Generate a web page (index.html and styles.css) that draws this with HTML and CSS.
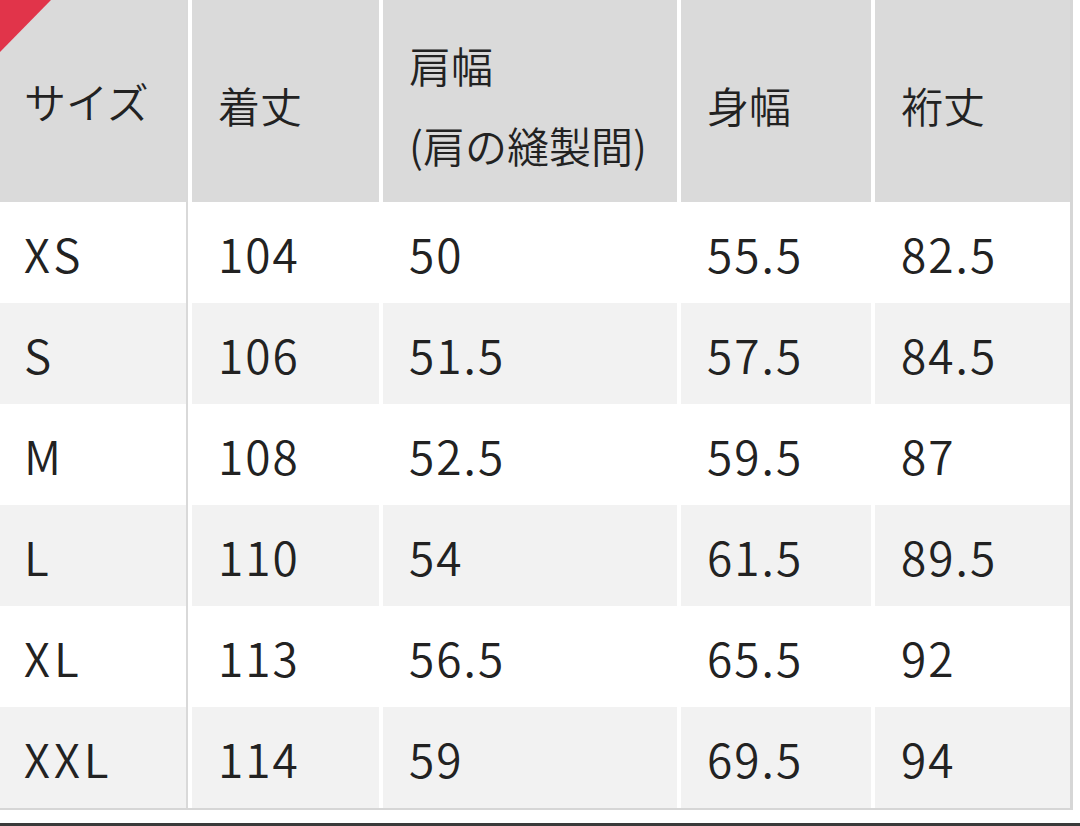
FILE: index.html
```html
<!DOCTYPE html>
<html lang="ja">
<head>
<meta charset="utf-8">
<title>サイズ表</title>
<link rel="stylesheet" href="styles.css">
</head>
<body>
<div class="page">
  <div class="corner"></div>
  <div class="table">
    <div class="row head">
      <div class="cell">サイズ</div>
      <div class="cell">着丈</div>
      <div class="cell two"><span class="ln">肩幅</span><span class="ln">(肩の縫製間)</span></div>
      <div class="cell">身幅</div>
      <div class="cell">裄丈</div>
    </div>
    <div class="row">
      <div class="cell">XS</div><div class="cell">104</div><div class="cell">50</div><div class="cell">55.5</div><div class="cell">82.5</div>
    </div>
    <div class="row alt">
      <div class="cell">S</div><div class="cell">106</div><div class="cell">51.5</div><div class="cell">57.5</div><div class="cell">84.5</div>
    </div>
    <div class="row">
      <div class="cell">M</div><div class="cell">108</div><div class="cell">52.5</div><div class="cell">59.5</div><div class="cell">87</div>
    </div>
    <div class="row alt">
      <div class="cell">L</div><div class="cell">110</div><div class="cell">54</div><div class="cell">61.5</div><div class="cell">89.5</div>
    </div>
    <div class="row">
      <div class="cell">XL</div><div class="cell">113</div><div class="cell">56.5</div><div class="cell">65.5</div><div class="cell">92</div>
    </div>
    <div class="row alt">
      <div class="cell">XXL</div><div class="cell">114</div><div class="cell">59</div><div class="cell">69.5</div><div class="cell">94</div>
    </div>
  </div>
  <div class="bottom-bar"></div>
</div>
</body>
</html>
```

FILE: styles.css
```css
html, body {
  margin: 0;
  padding: 0;
  background: #ffffff;
}

.page {
  position: relative;
  width: 1080px;
  height: 826px;
  overflow: hidden;
  font-family: "Noto Sans CJK JP", "Noto Sans", sans-serif;
  font-weight: 350;
  color: #222222;
}

.corner {
  position: absolute;
  left: 0;
  top: 0;
  width: 52px;
  height: 52px;
  background: #e1344a;
  clip-path: polygon(0 0, 51px 0, 0 52px);
  z-index: 2;
}

.table {
  width: 1073px;
  border-right: 3px solid #d6d6d6;
  border-bottom: 2px solid #d6d6d6;
  box-sizing: border-box;
}

.row {
  display: grid;
  grid-template-columns: 188px 187px 294px 190px 195px;
  column-gap: 4px;
  height: 101px;
}

.row.head {
  height: 202px;
}

.cell {
  display: flex;
  align-items: center;
  padding-left: 26px;
  font-size: 46px;
  line-height: 1;
  letter-spacing: 2px;
  box-sizing: border-box;
}

.cell:first-child {
  border-right: 2px solid #d9d9d9;
  padding-left: 24px;
  letter-spacing: 4px;
}

.row.head .cell {
  background: #dadada;
  font-size: 42px;
  letter-spacing: 0;
  padding-top: 8px;
  padding-left: 26px;
}

.row.head .cell:first-child {
  padding-top: 0;
  padding-left: 24px;
}

.row.head .cell.two {
  flex-direction: column;
  align-items: flex-start;
  justify-content: center;
}

.ln {
  display: block;
  line-height: 80px;
}

.row.alt .cell {
  background: #f2f2f2;
}

.bottom-bar {
  position: absolute;
  left: 0;
  right: 0;
  bottom: 0;
  height: 3px;
  background: #3a3a3a;
}
```
